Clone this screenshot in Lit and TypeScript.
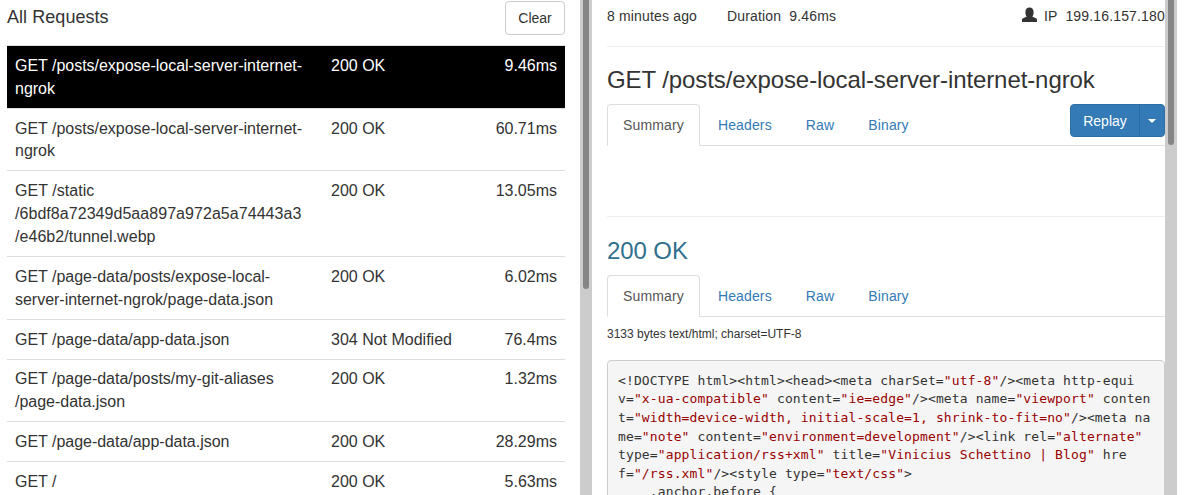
import { LitElement, html, css, svg } from "lit";
import { customElement } from "lit/decorators.js";

const rows = [
  { p: "GET /posts/expose-local-server-internet-ngrok", s: "200 OK", d: "9.46ms", on: true },
  { p: "GET /posts/expose-local-server-internet-ngrok", s: "200 OK", d: "60.71ms" },
  { p: "GET /static /6bdf8a72349d5aa897a972a5a74443a3 /e46b2/tunnel.webp", s: "200 OK", d: "13.05ms", hex: true },
  { p: "GET /page-data/posts/expose-local-server-internet-ngrok/page-data.json", s: "200 OK", d: "6.02ms" },
  { p: "GET /page-data/app-data.json", s: "304 Not Modified", d: "76.4ms" },
  { p: "GET /page-data/posts/my-git-aliases /page-data.json", s: "200 OK", d: "1.32ms" },
  { p: "GET /page-data/app-data.json", s: "200 OK", d: "28.29ms" },
  { p: "GET /", s: "200 OK", d: "5.63ms" },
];

const tabs = () => html`<ul class="tabs">
  <li class="tab active">Summary</li>
  <li class="tab">Headers</li>
  <li class="tab">Raw</li>
  <li class="tab">Binary</li>
</ul>`;

const userIcon = svg`<path d="M0 15v-2.2c0-.8.4-1.2 1.1-1.5l3.7-1.7C4 8.8 3.4 7.3 3.4 5.2 3.4 2.3 4.8.5 7.5.5s4.1 1.8 4.1 4.7c0 2.1-.6 3.6-1.4 4.4l3.7 1.7c.7.3 1.1.7 1.1 1.5V15z"/>`;

const s = (v: string) => html`<span class="str">${v}</span>`;

@customElement("app-root")
export class AppRoot extends LitElement {
  static styles = css`
    :host {
      display: flex;
      width: 1191px;
      height: 495px;
      overflow: hidden;
      background: #fff;
      font-family: "Liberation Sans", Arial, sans-serif;
      font-size: 14px;
      line-height: 20px;
      color: #333;
    }
    .left {
      width: 580px;
      flex: none;
      padding-left: 7px;
      box-sizing: border-box;
      overflow: hidden;
    }
    .head {
      width: 558px;
      height: 45px;
      display: flex;
      justify-content: space-between;
      align-items: flex-start;
    }
    .head h4 {
      margin: 7px 0 0;
      font-size: 18px;
      font-weight: 500;
      line-height: 20px;
      letter-spacing: 0.05px;
    }
    .clear {
      width: 60px;
      height: 34px;
      margin-top: 1px;
      box-sizing: border-box;
      border: 1px solid #ccc;
      border-radius: 4px;
      background: #fff;
      font: inherit;
      color: #333;
      padding: 0;
    }
    table {
      width: 558px;
      table-layout: fixed;
      border-collapse: collapse;
      font-size: 16px;
      line-height: 22.857px;
    }
    td {
      padding: 8.85px 8px 7.15px;
      border-top: 1px solid #ddd;
      vertical-align: top;
    }
    td.path { letter-spacing: -0.02px; }
    td.hex { letter-spacing: 0.05px; }
    td.dur { text-align: right; }
    tr.on td { background: #000; color: #fff; }
    .c1 { width: 316px; }
    .c2 { width: 141px; }
    .track {
      width: 12px;
      height: 495px;
      flex: none;
      box-sizing: border-box;
      padding: 0 3px;
      background: #ccc;
    }
    .thumb {
      background: #858585;
      border-radius: 0 0 3px 3px;
    }
    .t1 { height: 289px; }
    .t2 { height: 145px; }
    .right {
      width: 573px;
      flex: none;
      box-sizing: border-box;
      padding-left: 15px;
      overflow: hidden;
    }
    .meta {
      width: 580px;
      height: 46px;
      padding-top: 6px;
      box-sizing: border-box;
      display: flex;
      white-space: pre;
      letter-spacing: 0.16px;
    }
    .ago { width: 120px; }
    .duration { width: 295px; }
    .icon {
      width: 15px;
      height: 15px;
      margin: 1px 7px 0 0;
      fill: #333;
      flex: none;
    }
    hr {
      margin: 0;
      border: 0;
      border-top: 1px solid #eee;
    }
    h3 {
      margin: 20px 0 11px;
      font-size: 24px;
      font-weight: 500;
      line-height: 26.4px;
      letter-spacing: -0.09px;
    }
    h3.ok { color: #31708f; margin: 21px 0 10px; }
    .nav {
      position: relative;
      height: 42px;
    }
    .tabs {
      display: flex;
      margin: 0;
      padding: 0;
      list-style: none;
      border-bottom: 1px solid #ddd;
      height: 41px;
    }
    .tab {
      margin-right: 2px;
      padding: 10px 15px;
      height: 42px;
      box-sizing: border-box;
      border: 1px solid transparent;
      border-radius: 4px 4px 0 0;
      color: #337ab7;
      letter-spacing: 0.14px;
    }
    .tab.active {
      color: #555;
      background: #fff;
      border-color: #ddd #ddd #fff;
    }
    .replay {
      position: absolute;
      right: 0;
      top: 0;
      display: flex;
      height: 33px;
      color: #fff;
      background: #337ab7;
      border: 1px solid #2e6da4;
      border-radius: 4px;
      box-sizing: border-box;
      align-items: stretch;
    }
    .replay span {
      padding-top: 6px;
      width: 68px;
      text-align: center;
      box-sizing: border-box;
    }
    .replay i {
      width: 25px;
      border-left: 1px solid #2e6da4;
      display: flex;
      align-items: center;
      justify-content: center;
      box-sizing: border-box;
    }
    .replay i::after {
      content: "";
      border-top: 4px solid #fff;
      border-left: 4px solid transparent;
      border-right: 4px solid transparent;
    }
    .gap { height: 70px; }
    .bytes {
      font-size: 12px;
      line-height: 17px;
      margin: 9px 0 17px;
    }
    pre {
      margin: 0;
      padding: 11px 10px 9px;
      background: #f5f5f5;
      border: 1px solid #ccc;
      border-radius: 4px;
      font-family: "DejaVu Sans Mono", monospace;
      font-size: 13px;
      line-height: 18.571px;
      letter-spacing: 0.12px;
      color: #333;
      white-space: pre;
      overflow: hidden;
    }
    .str { color: #900; }
  `;

  render() {
    return html`
      <section class="left">
        <div class="head">
          <h4>All Requests</h4>
          <button class="clear">Clear</button>
        </div>
        <table>
          <colgroup><col class="c1" /><col class="c2" /><col /></colgroup>
          <tbody>
            ${rows.map(
              (r) => html`<tr class=${r.on ? "on" : ""}>
                <td class=${r.hex ? "hex" : "path"}>${r.p}</td>
                <td>${r.s}</td>
                <td class="dur">${r.d}</td>
              </tr>`,
            )}
          </tbody>
        </table>
      </section>
      <div class="track"><div class="thumb t1"></div></div>
      <section class="right">
        <div class="meta">
          <span class="ago">8 minutes ago</span>
          <span class="duration">Duration  9.46ms</span>
          <svg class="icon" viewBox="0 0 15 15">${userIcon}</svg>
          <span>IP  199.16.157.180</span>
        </div>
        <hr />
        <h3>GET /posts/expose-local-server-internet-ngrok</h3>
        <div class="nav">
          ${tabs()}
          <div class="replay"><span>Replay</span><i></i></div>
        </div>
        <div class="gap"></div>
        <hr />
        <h3 class="ok">200 OK</h3>
        <div class="nav">${tabs()}</div>
        <div class="bytes">3133 bytes text/html; charset=UTF-8</div>
        <pre>&lt;!DOCTYPE html&gt;&lt;html&gt;&lt;head&gt;&lt;meta charSet=${s('"utf-8"')}/&gt;&lt;meta http-equi
v=${s('"x-ua-compatible"')} content=${s('"ie=edge"')}/&gt;&lt;meta name=${s('"viewport"')} conten
t=${s('"width=device-width, initial-scale=1, shrink-to-fit=no"')}/&gt;&lt;meta na
me=${s('"note"')} content=${s('"environment=development"')}/&gt;&lt;link rel=${s('"alternate"')}
type=${s('"application/rss+xml"')} title=${s('"Vinicius Schettino | Blog"')} hre
f=${s('"/rss.xml"')}/&gt;&lt;style type=${s('"text/css"')}&gt;
    .anchor.before {
    }</pre>
      </section>
      <div class="track"><div class="thumb t2"></div></div>
    `;
  }
}
